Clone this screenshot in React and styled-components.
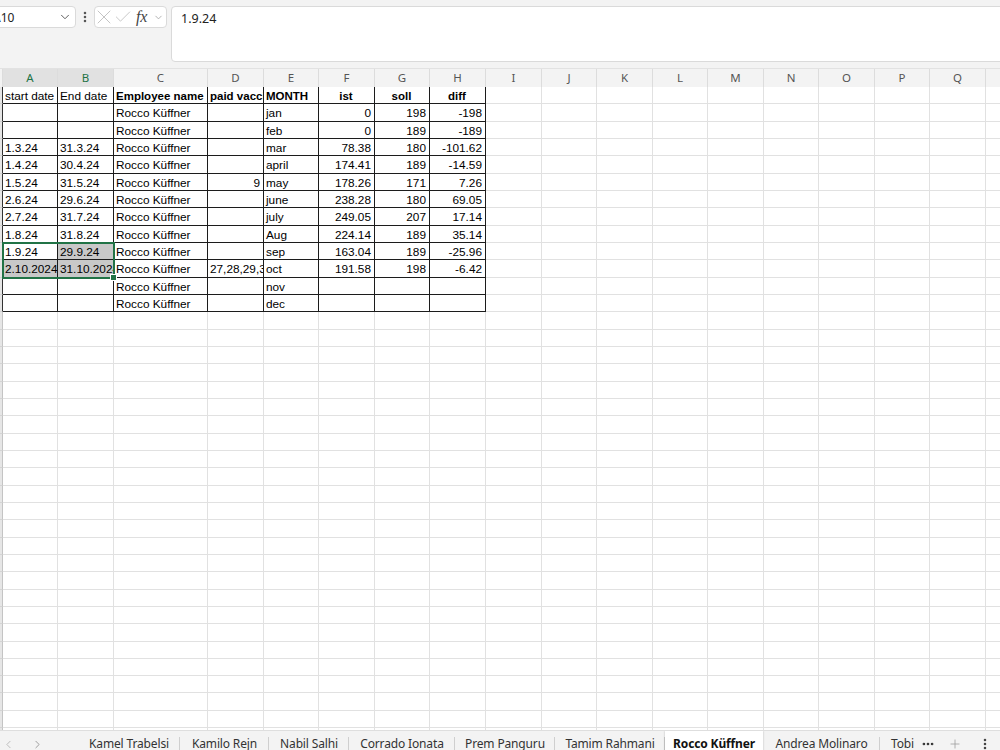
import React from 'react';
import styled, { createGlobalStyle } from 'styled-components';
import { ChevronDown, ChevronLeft, ChevronRight, X, Check, EllipsisVertical, Ellipsis, Plus } from 'lucide-react';

const Global = createGlobalStyle`
  html, body { margin: 0; padding: 0; width: 1000px; height: 750px; overflow: hidden; background: #fff; }
  #root { width: 1000px; height: 750px; }
`;

const COLS = [3, 55, 56, 94, 56, 55, 56, 55, 56, 56, 55, 56, 55, 56, 55, 56, 55, 56, 60];
const TEMPLATE = COLS.map((w) => w + 'px').join(' ');
const LETTERS = ['', 'A', 'B', 'C', 'D', 'E', 'F', 'G', 'H', 'I', 'J', 'K', 'L', 'M', 'N', 'O', 'P', 'Q', ''];

const HEADER = [
  { v: 'start date' },
  { v: 'End date' },
  { v: 'Employee name', b: true },
  { v: 'paid vacci', b: true },
  { v: 'MONTH', b: true },
  { v: 'ist', b: true, a: 'center' },
  { v: 'soll', b: true, a: 'center' },
  { v: 'diff', b: true, a: 'center' },
];

const R = 'Rocco Küffner';
const DATA = [
  ['', '', R, '', 'jan', '0', '198', '-198'],
  ['', '', R, '', 'feb', '0', '189', '-189'],
  ['1.3.24', '31.3.24', R, '', 'mar', '78.38', '180', '-101.62'],
  ['1.4.24', '30.4.24', R, '', 'april', '174.41', '189', '-14.59'],
  ['1.5.24', '31.5.24', R, '9', 'may', '178.26', '171', '7.26'],
  ['2.6.24', '29.6.24', R, '', 'june', '238.28', '180', '69.05'],
  ['2.7.24', '31.7.24', R, '', 'july', '249.05', '207', '17.14'],
  ['1.8.24', '31.8.24', R, '', 'Aug', '224.14', '189', '35.14'],
  ['1.9.24', '29.9.24', R, '', 'sep', '163.04', '189', '-25.96'],
  ['2.10.2024', '31.10.2024', R, '27,28,29,3', 'oct', '191.58', '198', '-6.42'],
  ['', '', R, '', 'nov', '', '', ''],
  ['', '', R, '', 'dec', '', '', ''],
];

const SELECTED = { '9-1': true, '10-0': true, '10-1': true };

const TABS = [
  { name: 'Kamel Trabelsi', w: 102 },
  { name: 'Kamilo Rejn', w: 89 },
  { name: 'Nabil Salhi', w: 80 },
  { name: 'Corrado Ionata', w: 106 },
  { name: 'Prem Panguru', w: 100 },
  { name: 'Tamim Rahmani', w: 110 },
  { name: 'Rocco Küffner', w: 98, active: true },
  { name: 'Andrea Molinaro', w: 117 },
  { name: 'Tobi', w: 60, left: true },
];

const ROW_H = 17.333;
const TOTAL_ROWS = 38;

const Page = styled.div`
  display: flex;
  flex-direction: column;
  width: 1000px;
  height: 750px;
  overflow: hidden;
  font-family: "Liberation Sans", Arial, sans-serif;
`;

const TopBar = styled.div`
  flex: none;
  height: 69px;
  box-sizing: border-box;
  background: #f3f3f3;
  display: flex;
  align-items: flex-start;
  padding-top: 6px;
  border-bottom: 1px solid #e2e2e2;
`;

const NameBox = styled.div`
  margin-left: -15px;
  width: 91px;
  height: 22px;
  box-sizing: border-box;
  background: #fff;
  border: 1px solid #dadada;
  border-radius: 4px;
  display: flex;
  align-items: center;
  justify-content: space-between;
  padding: 0 3px 0 7px;
  font-family: "Noto Sans", sans-serif;
  font-size: 12px;
  color: #222;
`;

const Kebab = styled.div`
  width: 18px;
  height: 22px;
  display: flex;
  align-items: center;
  justify-content: center;
  color: #555;
`;

const FxBox = styled.div`
  width: 73px;
  height: 22px;
  box-sizing: border-box;
  background: #fff;
  border: 1px solid #dadada;
  border-radius: 4px;
  display: flex;
  align-items: center;
  padding-left: 0;
  color: #c4c4c4;
  overflow: hidden;
`;

const IconSlot = styled.span`
  display: flex;
  flex: none;
  align-items: center;
  justify-content: center;
  width: ${(p) => p.$w}px;
  height: 20px;
  margin-right: ${(p) => p.$mr || 0}px;
  color: ${(p) => p.$c || 'inherit'};
  & > svg { flex: none; }
`;

const FxText = styled.span`
  font-family: "Liberation Serif", serif;
  font-style: italic;
  font-weight: 400;
  font-size: 16px;
  color: #444;
  width: 15px;
  margin-right: 2px;
  letter-spacing: -0.3px;
`;

const FormulaBox = styled.div`
  flex: 1;
  margin-left: 4px;
  margin-right: -10px;
  height: 56px;
  box-sizing: border-box;
  background: #fff;
  border: 1px solid #dadada;
  border-radius: 4px;
  padding: 3px 9px;
  font-family: "Noto Sans", sans-serif;
  font-size: 12.5px;
  color: #222;
`;

const Sheet = styled.div`
  flex: 1;
  min-height: 0;
  overflow: hidden;
  background: #fff;
  display: flex;
  flex-direction: column;
`;

const HeaderRow = styled.div`
  flex: none;
  display: grid;
  grid-template-columns: ${TEMPLATE};
  height: 18px;
  background: #f3f3f3;
`;

const ColHead = styled.div`
  box-sizing: border-box;
  border-right: 1px solid #dcdcdc;
  border-bottom: ${(p) => (p.$sel ? '2px solid #217346' : '1px solid #c6c6c6')};
  background: ${(p) => (p.$sel ? '#e1e1e1' : '#f3f3f3')};
  color: ${(p) => (p.$sel ? '#217346' : '#555')};
  font-family: "Noto Sans", sans-serif;
  font-size: 11.5px;
  line-height: 18px;
  text-align: center;
`;

const Body = styled.div`
  position: relative;
  flex: 1;
  min-height: 0;
`;

const Row = styled.div`
  display: grid;
  grid-template-columns: ${TEMPLATE};
  height: ${ROW_H}px;
`;

const RowHead = styled.div`
  box-sizing: border-box;
  background: #e6e6e6;
  border-right: 1px solid ${(p) => (p.$edge ? '#333' : '#c4c4c4')};
  border-bottom: 1px solid #d4d4d4;
`;

const Cell = styled.div`
  box-sizing: border-box;
  overflow: hidden;
  white-space: nowrap;
  border-right: 1px solid ${(p) => (p.$edge ? '#1c1c1c' : '#e1e1e1')};
  border-bottom: 1px solid ${(p) => (p.$edge ? '#1c1c1c' : '#e1e1e1')};
  background: ${(p) => (p.$sel ? '#c8c8c8' : '#fff')};
  text-align: ${(p) => p.$align || 'left'};
  font-weight: ${(p) => (p.$bold ? 700 : 400)};
  font-size: ${(p) => (p.$bold ? '11.5px' : '11.8px')};
  line-height: 17px;
  padding: 1px 3px 0 2px;
  color: #000;
`;

const Selection = styled.div`
  position: absolute;
  left: 2px;
  top: ${ROW_H * 9 - 1}px;
  width: 113px;
  height: ${ROW_H * 2 + 2}px;
  box-sizing: border-box;
  border: 2px solid #217346;
  pointer-events: none;
`;

const FillHandle = styled.div`
  position: absolute;
  right: -4px;
  bottom: -4px;
  width: 7px;
  height: 7px;
  box-sizing: border-box;
  background: #217346;
  border: 1px solid #fff;
`;

const TabBar = styled.div`
  flex: none;
  height: 19px;
  overflow: hidden;
  background: #f3f3f3;
  border-top: 1px solid #dedede;
  display: flex;
  align-items: flex-start;
  font-family: "Noto Sans", sans-serif;
`;

const NavArea = styled.div`
  width: 78px;
  flex: none;
  display: flex;
  align-items: center;
  height: 26px;
  color: #8a8a8a;
`;

const NavBtn = styled.span`
  display: flex;
  align-items: center;
  justify-content: center;
  width: 16px;
  margin-right: ${(p) => p.$mr || 0}px;
`;

const TabList = styled.div`
  width: 840px;
  flex: none;
  display: flex;
  overflow: hidden;
`;

const Tab = styled.div`
  position: relative;
  flex: none;
  width: ${(p) => p.$w}px;
  height: 26px;
  line-height: 25px;
  box-sizing: border-box;
  text-align: ${(p) => (p.$left ? 'left' : 'center')};
  padding-left: ${(p) => (p.$left ? 11 : 0)}px;
  font-size: 12px;
  letter-spacing: -0.15px;
  white-space: nowrap;
  color: ${(p) => (p.$active ? '#111' : '#333')};
  font-weight: ${(p) => (p.$active ? 700 : 400)};
  background: ${(p) => (p.$active ? '#fff' : 'transparent')};
  box-shadow: ${(p) => (p.$active ? '0 0 2px rgba(0,0,0,0.25)' : 'none')};
  &::after {
    content: '';
    display: ${(p) => (p.$active || p.$left ? 'none' : 'block')};
    position: absolute;
    right: 0;
    top: 6px;
    width: 1px;
    height: 14px;
    background: #cfcfcf;
  }
`;

const BarTools = styled.div`
  flex: 1;
  display: flex;
  align-items: center;
  height: 26px;
`;

const Tool = styled.span`
  display: flex;
  align-items: center;
  justify-content: center;
  width: ${(p) => p.$w}px;
  color: ${(p) => p.$c};
`;

const isNum = (v) => /^-?\d+(\.\d+)?$/.test(v);

export default function App() {
  const rows = [];
  for (let r = 0; r < TOTAL_ROWS; r++) {
    const inTable = r <= 12;
    const cells = [];
    for (let c = 0; c < COLS.length - 1; c++) {
      let v = '';
      let bold = false;
      let align = 'left';
      const edge = inTable && c < 8;
      if (r === 0 && c < 8) {
        v = HEADER[c].v;
        bold = !!HEADER[c].b;
        align = HEADER[c].a || 'left';
      } else if (inTable && c < 8) {
        v = DATA[r - 1][c];
        align = isNum(v) ? 'right' : 'left';
      }
      cells.push(
        <Cell key={c} $edge={edge} $bold={bold} $align={align} $sel={SELECTED[`${r}-${c}`]}>
          {v}
        </Cell>
      );
    }
    rows.push(
      <Row key={r}>
        <RowHead $edge={inTable} />
        {cells}
      </Row>
    );
  }

  return (
    <Page>
      <Global />
      <TopBar>
        <NameBox>
          <span>A10</span>
          <ChevronDown size={14} strokeWidth={1.6} color="#555" />
        </NameBox>
        <Kebab>
          <EllipsisVertical size={14} strokeWidth={2.4} />
        </Kebab>
        <FxBox>
          <IconSlot $w={18} $mr={1}>
            <X size={24} strokeWidth={1} />
          </IconSlot>
          <IconSlot $w={18} $mr={4}>
            <Check size={20} strokeWidth={1.1} />
          </IconSlot>
          <FxText>fx</FxText>
          <IconSlot $w={10} $c="#999">
            <ChevronDown size={11} strokeWidth={1.6} />
          </IconSlot>
        </FxBox>
        <FormulaBox>1.9.24</FormulaBox>
      </TopBar>

      <Sheet>
        <HeaderRow>
          {LETTERS.map((l, i) => (
            <ColHead key={i} $sel={l === 'A' || l === 'B'}>
              {l}
            </ColHead>
          ))}
        </HeaderRow>
        <Body>
          {rows}
          <Selection>
            <FillHandle />
          </Selection>
        </Body>
      </Sheet>

      <TabBar>
        <NavArea>
          <NavBtn $mr={13}>
            <ChevronLeft size={13} strokeWidth={1.5} color="#b0b0b0" />
          </NavBtn>
          <NavBtn>
            <ChevronRight size={13} strokeWidth={1.5} />
          </NavBtn>
        </NavArea>
        <TabList>
          {TABS.map((t) => (
            <Tab key={t.name} $w={t.w} $active={t.active} $left={t.left}>
              {t.name}
            </Tab>
          ))}
        </TabList>
        <BarTools>
          <Tool $w={20} $c="#333">
            <Ellipsis size={14} strokeWidth={2.6} />
          </Tool>
          <Tool $w={34} $c="#999">
            <Plus size={14} strokeWidth={1.3} />
          </Tool>
          <Tool $w={26} $c="#444">
            <EllipsisVertical size={14} strokeWidth={2.4} />
          </Tool>
        </BarTools>
      </TabBar>
    </Page>
  );
}
